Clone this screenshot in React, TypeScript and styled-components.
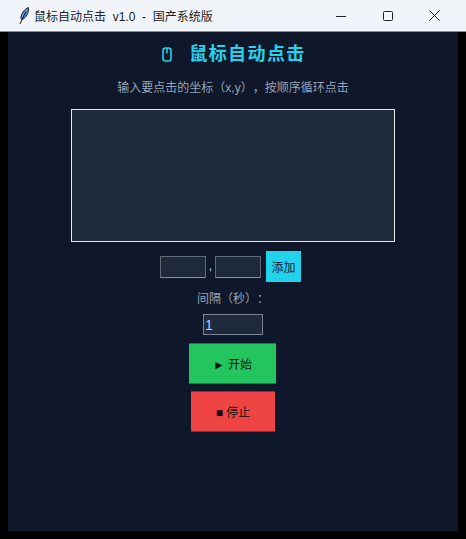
import styled, { createGlobalStyle } from 'styled-components';

const FONT = '"Liberation Sans", "Noto Sans CJK SC", sans-serif';

const GlobalStyle = createGlobalStyle`
  html, body {
    margin: 0;
    padding: 0;
    background: #000;
    font-family: ${FONT};
    text-spacing-trim: space-all;
  }
`;

const Window = styled.div`
  width: 466px;
  height: 539px;
  display: flex;
  flex-direction: column;
  overflow: hidden;
  background: #000;
`;

const TitleBar = styled.div`
  height: 31px;
  flex: none;
  display: flex;
  align-items: center;
  padding-right: 8px;
  background: #f1f5fa;
  border-bottom: 1px solid #8b8f96;
`;

const AppIcon = styled.svg`
  width: 12px;
  height: 18px;
  margin-left: 18px;
  margin-right: 5px;
  flex: none;
`;

const TitleText = styled.span`
  flex: 1;
  font-size: 12px;
  color: #222;
  white-space: pre;
  margin-left: -1px;
`;

const WinButton = styled.div`
  width: 47px;
  height: 31px;
  display: flex;
  align-items: center;
  justify-content: center;
  color: #222;
`;

const Content = styled.main`
  flex: 1;
  margin: 0 8px 8px;
  display: flex;
  flex-direction: column;
  align-items: center;
  background: #0f172a;
`;

const Heading = styled.h1`
  margin: 9px 0 0;
  padding-left: 2px;
  height: 27px;
  display: flex;
  align-items: center;
  gap: 17px;
  font-size: 18px;
  line-height: 27px;
  font-weight: 700;
  letter-spacing: 1.4px;
  color: #22d3ee;
`;

const Hint = styled.p`
  margin: 10px 0 0;
  height: 20px;
  font-size: 12px;
  line-height: 20px;
  color: #94a3b8;
`;

const ListBox = styled.div`
  box-sizing: border-box;
  width: 324px;
  height: 133px;
  margin-top: 11px;
  background: #1e293b;
  border: 1px solid #e6e8ea;
`;

const EntryRow = styled.div`
  margin-top: 9px;
  padding-right: 5px;
  display: flex;
  align-items: center;
`;

const Field = styled.input<{ $w: number }>`
  box-sizing: border-box;
  width: ${(p) => p.$w}px;
  height: 22px;
  padding: 0 1px;
  background: #1e293b;
  border: 1px solid #5f6874;
  border-bottom-color: #8a929c;
  outline: none;
  color: #9fd0ff;
  font-family: ${FONT};
  font-size: 14px;
`;

const Comma = styled.span`
  width: 9px;
  text-align: center;
  font-size: 12px;
  line-height: 21px;
  color: #cbd5e1;
`;

const AddButton = styled.button`
  box-sizing: border-box;
  width: 35px;
  height: 31px;
  margin-left: 5px;
  padding: 0;
  border: none;
  background: #22d3ee;
  color: #0f172a;
  font-family: ${FONT};
  font-size: 12px;
`;

const IntervalLabel = styled.div`
  margin-top: 7px;
  height: 20px;
  font-size: 12px;
  line-height: 20px;
  color: #94a3b8;
`;

const IntervalField = styled(Field)`
  margin-top: 5px;
  height: 21px;
  border-color: #7b838e;
`;

const ActionButton = styled.button<{ $bg: string; $w: number; $edge: string }>`
  box-sizing: border-box;
  width: ${(p) => p.$w}px;
  height: 41px;
  padding: 0;
  border: none;
  border-bottom: 1px solid ${(p) => p.$edge};
  border-top: 1px solid ${(p) => p.$edge};
  background: ${(p) => p.$bg};
  color: #111;
  font-family: ${FONT};
  font-size: 12px;
`;

const StartButton = styled(ActionButton)`
  margin-top: 8px;
  margin-right: 1px;
`;

const StopButton = styled(ActionButton)`
  margin-top: 7px;
`;

export default function App() {
  return (
    <Window>
      <GlobalStyle />
      <TitleBar>
        <AppIcon viewBox="0 0 12 18">
          <path d="M10.5 0.5 C6.5 2 3 6.5 2.8 11.5 L4 12.5 C8 11 11 6 10.5 0.5 Z" fill="#5b8fe0" stroke="#10151f" strokeWidth="0.9" />
          <path d="M8 4.5 L2 17" stroke="#10151f" strokeWidth="1" fill="none" />
        </AppIcon>
        <TitleText>鼠标自动点击  v1.0  -  国产系统版</TitleText>
        <WinButton>
          <svg width="10" height="10" viewBox="0 0 10 10">
            <path d="M0 5.5 H10" stroke="currentColor" strokeWidth="1" />
          </svg>
        </WinButton>
        <WinButton>
          <svg width="10" height="10" viewBox="0 0 10 10">
            <rect x="0.5" y="0.5" width="9" height="9" rx="1" fill="none" stroke="currentColor" strokeWidth="1" />
          </svg>
        </WinButton>
        <WinButton>
          <svg width="11" height="11" viewBox="0 0 11 11">
            <path d="M0.5 0.5 L10.5 10.5 M10.5 0.5 L0.5 10.5" stroke="currentColor" strokeWidth="1" />
          </svg>
        </WinButton>
      </TitleBar>
      <Content>
        <Heading>
          <svg width="10" height="15" viewBox="0 0 10 15">
            <rect x="1" y="1" width="8" height="13" rx="2.5" fill="none" stroke="#22d3ee" strokeWidth="1.6" />
            <path d="M5 1 V6.5" stroke="#22d3ee" strokeWidth="1.6" />
          </svg>
          <span>鼠标自动点击</span>
        </Heading>
        <Hint>输入要点击的坐标（x,y），按顺序循环点击</Hint>
        <ListBox />
        <EntryRow>
          <Field $w={46} />
          <Comma>,</Comma>
          <Field $w={46} />
          <AddButton>添加</AddButton>
        </EntryRow>
        <IntervalLabel>间隔（秒）：</IntervalLabel>
        <IntervalField $w={60} defaultValue="1" />
        <StartButton $bg="#22c55e" $edge="#15803d" $w={87}>► 开始</StartButton>
        <StopButton $bg="#ef4444" $edge="#b91c1c" $w={84}>■ 停止</StopButton>
      </Content>
    </Window>
  );
}
